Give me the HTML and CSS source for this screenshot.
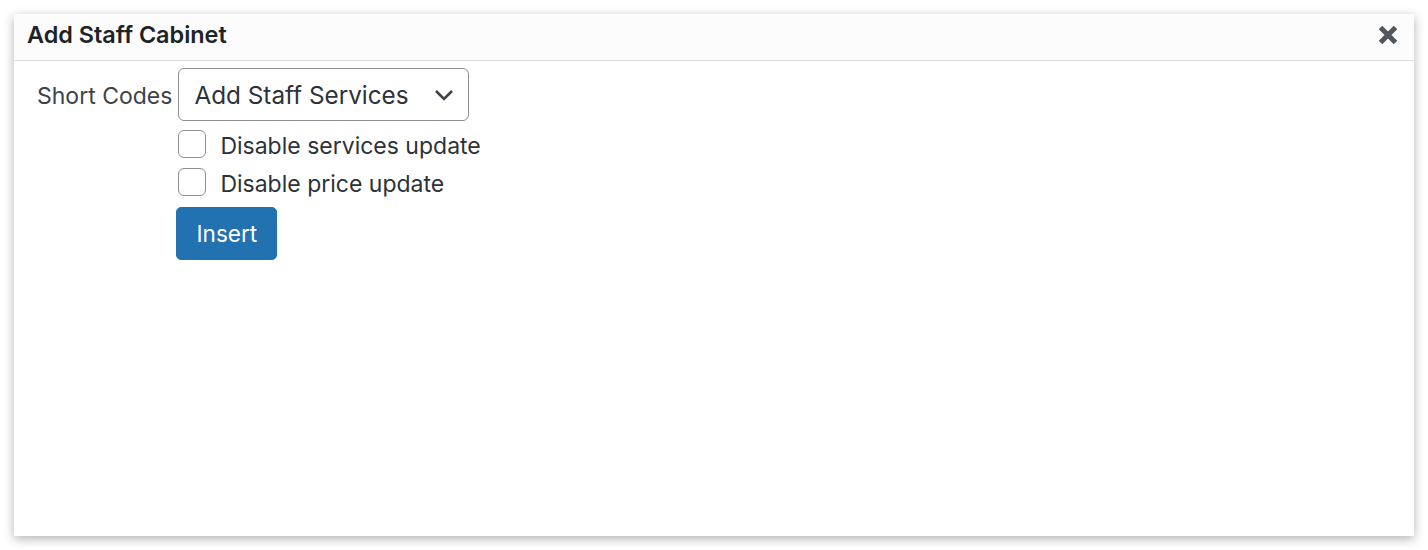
FILE: index.html
```html
<!DOCTYPE html>
<html lang="en">
<head>
<meta charset="utf-8">
<title>Add Staff Cabinet</title>
<link rel="stylesheet" href="styles.css">
</head>
<body>
<div class="dialog">
  <div class="dialog-header">
    <div class="dialog-title">Add Staff Cabinet</div>
    <button class="dialog-close" type="button" aria-label="Close">
      <svg width="22" height="22" viewBox="0 0 22 22"><path d="M3.5 3.5 L18.5 18.5 M18.5 3.5 L3.5 18.5" stroke="#50575e" stroke-width="5" stroke-linecap="butt"/></svg>
    </button>
  </div>
  <div class="dialog-body">
    <div class="form-row">
      <label class="field-label">Short Codes</label>
      <div class="fields">
        <div class="select">
          <span class="select-text">Add Staff Services</span>
          <svg class="select-arrow" width="20" height="12" viewBox="0 0 20 12"><path d="M2 2 L10 10 L18 2" fill="none" stroke="#3c434a" stroke-width="2.6"/></svg>
        </div>
        <label class="check"><span class="box"></span><span class="check-text">Disable services update</span></label>
        <label class="check"><span class="box"></span><span class="check-text">Disable price update</span></label>
        <button class="btn-primary" type="button">Insert</button>
      </div>
    </div>
  </div>
</div>
</body>
</html>
```
FILE: styles.css
```css
html, body {
  margin: 0;
  padding: 0;
  background: #ffffff;
}
html {
  height: 550px;
}
body {
  height: 550px;
  font-family: Inter, "Noto Sans", sans-serif;
  color: #1d2327;
}
.dialog {
  margin: 14px 0 0 14px;
  width: 1400px;
  height: 522px;
  background: #ffffff;
  box-shadow: 0 3px 10px rgba(0, 0, 0, 0.3);
  display: flex;
  flex-direction: column;
}
.dialog-header {
  box-sizing: border-box;
  height: 47px;
  background: #fcfcfc;
  border-bottom: 1px solid #dcdcde;
  display: flex;
  align-items: center;
  justify-content: space-between;
  padding: 0 15px 5px 13px;
}
.dialog-title {
  font-size: 23.4px;
  font-weight: 600;
  color: #1d2327;
}
.dialog-close {
  border: 0;
  background: none;
  padding: 0;
  width: 22px;
  height: 22px;
  display: flex;
}
.dialog-body {
  padding: 7px 0 0 23px;
}
.form-row {
  display: flex;
  align-items: flex-start;
  gap: 6px;
}
.field-label {
  font-size: 23px;
  color: #3c434a;
  line-height: 54px;
  padding-top: 1px;
}
.fields {
  display: flex;
  flex-direction: column;
  align-items: flex-start;
}
.select {
  box-sizing: border-box;
  width: 291px;
  height: 53px;
  border: 1.5px solid #8c8f94;
  border-radius: 6px;
  display: flex;
  align-items: center;
  justify-content: space-between;
  padding: 0 14px 0 15px;
  margin-bottom: 9px;
}
.select-text {
  font-size: 24.3px;
  color: #2c3338;
}
.check {
  display: flex;
  align-items: center;
  gap: 14px;
  height: 28px;
  margin-bottom: 10px;
}
.box {
  box-sizing: border-box;
  width: 28px;
  height: 28px;
  border: 1.75px solid #8c8f94;
  border-radius: 6px;
  background: #fff;
}
.check-text {
  font-size: 23px;
  color: #2c3338;
  padding-top: 4px;
}
.btn-primary {
  margin: 1px 0 0 -2px;
  width: 101px;
  height: 53px;
  background: #2271b1;
  border: 1px solid #2271b1;
  border-radius: 5px;
  color: #ffffff;
  font-family: Inter, "Noto Sans", sans-serif;
  font-size: 22.6px;
  padding: 0;
}
```
